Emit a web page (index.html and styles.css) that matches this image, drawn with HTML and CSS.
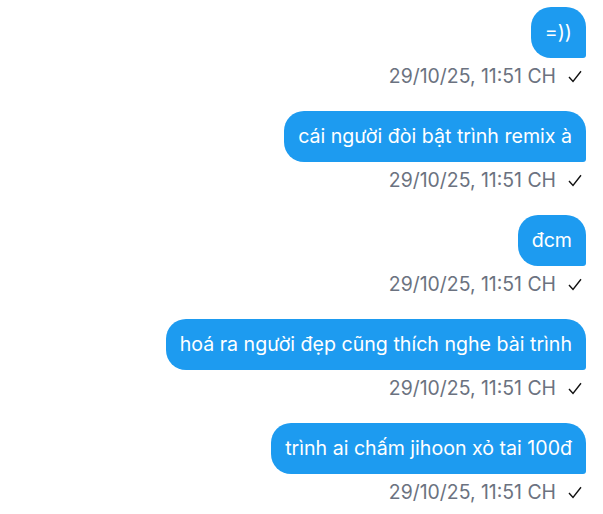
FILE: index.html
```html
<!DOCTYPE html>
<html lang="vi">
<head>
  <meta charset="UTF-8">
  <meta name="viewport" content="width=device-width, initial-scale=1.0">
  <title>Tin nhắn</title>
  <link rel="stylesheet" href="styles.css">
</head>
<body>
  <div class="chat">
    <div class="msg">
      <div class="bubble">=))</div>
      <div class="meta">29/10/25, 11:51 CH <svg class="tick" viewBox="0 0 14 13"><path d="M1 7 L5 11.5 L13 1.2"/></svg></div>
    </div>
    <div class="msg">
      <div class="bubble">cái người đòi bật trình remix à</div>
      <div class="meta">29/10/25, 11:51 CH <svg class="tick" viewBox="0 0 14 13"><path d="M1 7 L5 11.5 L13 1.2"/></svg></div>
    </div>
    <div class="msg">
      <div class="bubble">đcm</div>
      <div class="meta">29/10/25, 11:51 CH <svg class="tick" viewBox="0 0 14 13"><path d="M1 7 L5 11.5 L13 1.2"/></svg></div>
    </div>
    <div class="msg">
      <div class="bubble">hoá ra người đẹp cũng thích nghe bài trình</div>
      <div class="meta">29/10/25, 11:51 CH <svg class="tick" viewBox="0 0 14 13"><path d="M1 7 L5 11.5 L13 1.2"/></svg></div>
    </div>
    <div class="msg">
      <div class="bubble">trình ai chấm jihoon xỏ tai 100đ</div>
      <div class="meta">29/10/25, 11:51 CH <svg class="tick" viewBox="0 0 14 13"><path d="M1 7 L5 11.5 L13 1.2"/></svg></div>
    </div>
  </div>
</body>
</html>
```

FILE: styles.css
```css
body {
  margin: 0;
  background: #ffffff;
  font-family: 'Inter', 'Roboto', sans-serif;
}

.chat {
  display: flex;
  flex-direction: column;
  gap: 22px;
  padding: 7px 17px 0 0;
}

.msg {
  display: flex;
  flex-direction: column;
  align-items: flex-end;
}

.bubble {
  background-color: #1d9bf0;
  color: #ffffff;
  font-size: 19.6px;
  line-height: 25px;
  padding: 13px 14px;
  border-radius: 20px 20px 3px 20px;
}

.meta {
  display: flex;
  align-items: center;
  gap: 12px;
  margin-top: 5px;
  padding-right: 4px;
  font-size: 19.4px;
  line-height: 26px;
  color: #6b7280;
}

.tick {
  width: 14px;
  height: 13px;
  fill: none;
  stroke: #111111;
  stroke-width: 1.4;
}
```
